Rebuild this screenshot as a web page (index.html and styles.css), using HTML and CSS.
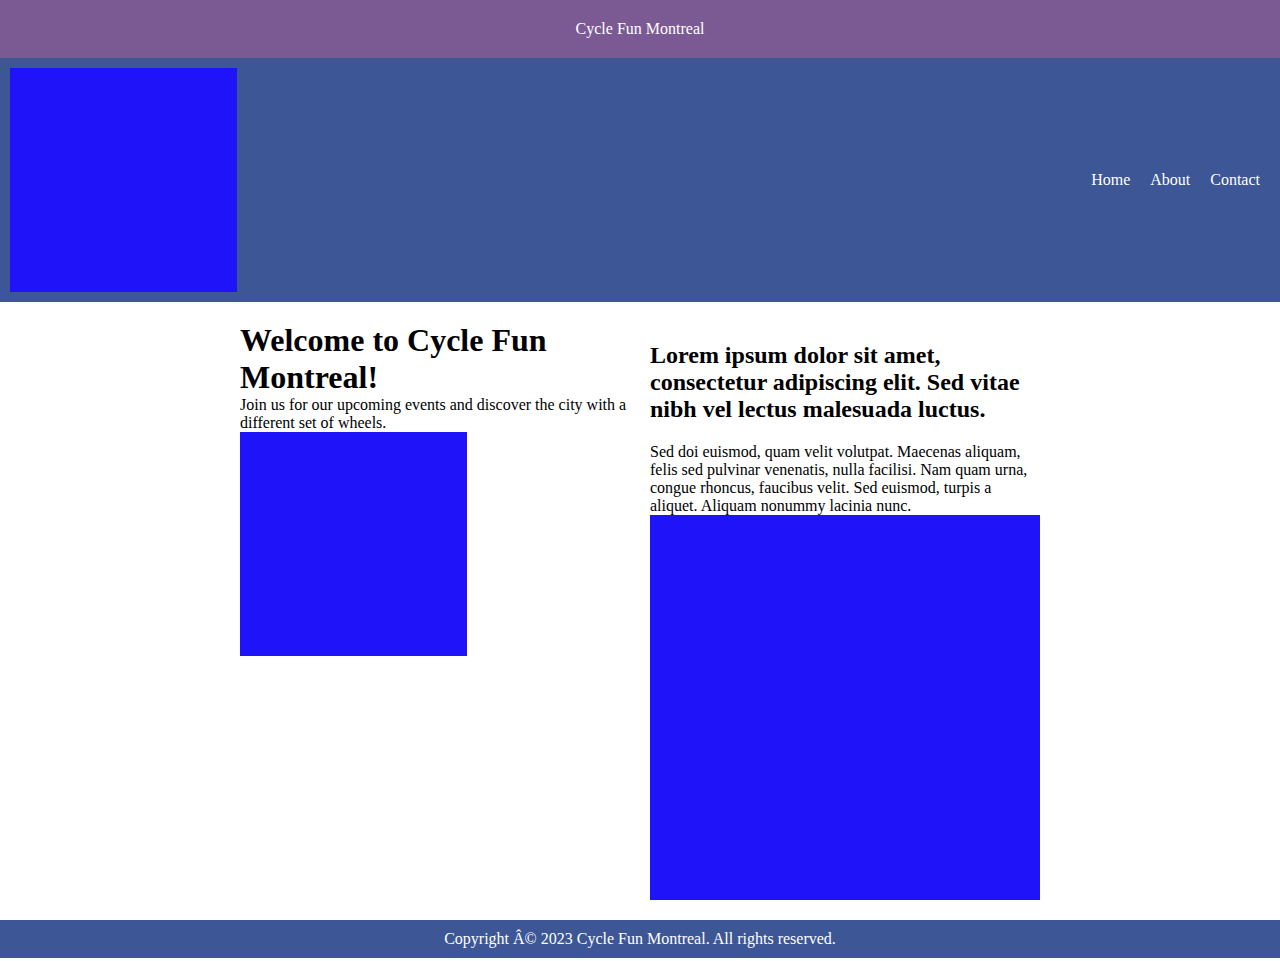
FILE: index.html
```html
<!DOCTYPE html>
<html lang="en">
<head>
<meta charset="utf-8">
<title>Cycle Fun Montreal</title>
<link rel="stylesheet" href="styles.css">
</head>
<body>
<div class="topbar">Cycle Fun Montreal</div>
<header class="header">
  <div class="logo img-block"></div>
  <nav class="nav">
    <a href="#">Home</a>
    <a href="#">About</a>
    <a href="#">Contact</a>
  </nav>
</header>
<main class="main">
  <section class="col">
    <h1 class="title">Welcome to Cycle Fun Montreal!</h1>
    <p class="text">Join us for our upcoming events and discover the city with a different set of wheels.</p>
    <div class="pic-small img-block"></div>
  </section>
  <section class="col">
    <h2 class="subtitle">Lorem ipsum dolor sit amet, consectetur adipiscing elit. Sed vitae nibh vel lectus malesuada luctus.</h2>
    <p class="text">Sed doi euismod, quam velit volutpat. Maecenas aliquam, felis sed pulvinar venenatis, nulla facilisi. Nam quam urna, congue rhoncus, faucibus velit. Sed euismod, turpis a aliquet. Aliquam nonummy lacinia nunc.</p>
    <div class="pic-large img-block"></div>
  </section>
</main>
<footer class="footer">Copyright Â© 2023 Cycle Fun Montreal. All rights reserved.</footer>
</body>
</html>
```
FILE: styles.css
```css
html, body {
  margin: 0;
  padding: 0;
}
body {
  font-family: "Liberation Serif", "Times New Roman", serif;
  font-size: 16px;
  color: #000;
  background: #fff;
}
.topbar {
  background: #7b5a94;
  color: #fff;
  text-align: center;
  padding: 20px 0;
  line-height: 18px;
}
.header {
  background: #3c5696;
  padding: 10px;
  display: flex;
  align-items: center;
  justify-content: space-between;
}
.img-block {
  background: #1e13f9;
}
.logo {
  width: 227px;
  height: 224px;
}
.nav {
  display: flex;
  gap: 20px;
  padding-right: 10px;
}
.nav a {
  color: #fff;
  text-decoration: none;
}
.main {
  width: 800px;
  margin: 0 auto;
  padding: 20px 0;
  display: grid;
  grid-template-columns: 1fr 1fr;
  column-gap: 20px;
  align-items: start;
}
.title {
  margin: 0;
  font-size: 32px;
}
.subtitle {
  margin: 0.83em 0;
  font-size: 24px;
}
.text {
  margin: 0;
}
.pic-small {
  width: 227px;
  height: 224px;
}
.pic-large {
  width: 390px;
  height: 385px;
}
.footer {
  background: #3c5696;
  color: #fff;
  text-align: center;
  padding: 10px 0;
}
```
